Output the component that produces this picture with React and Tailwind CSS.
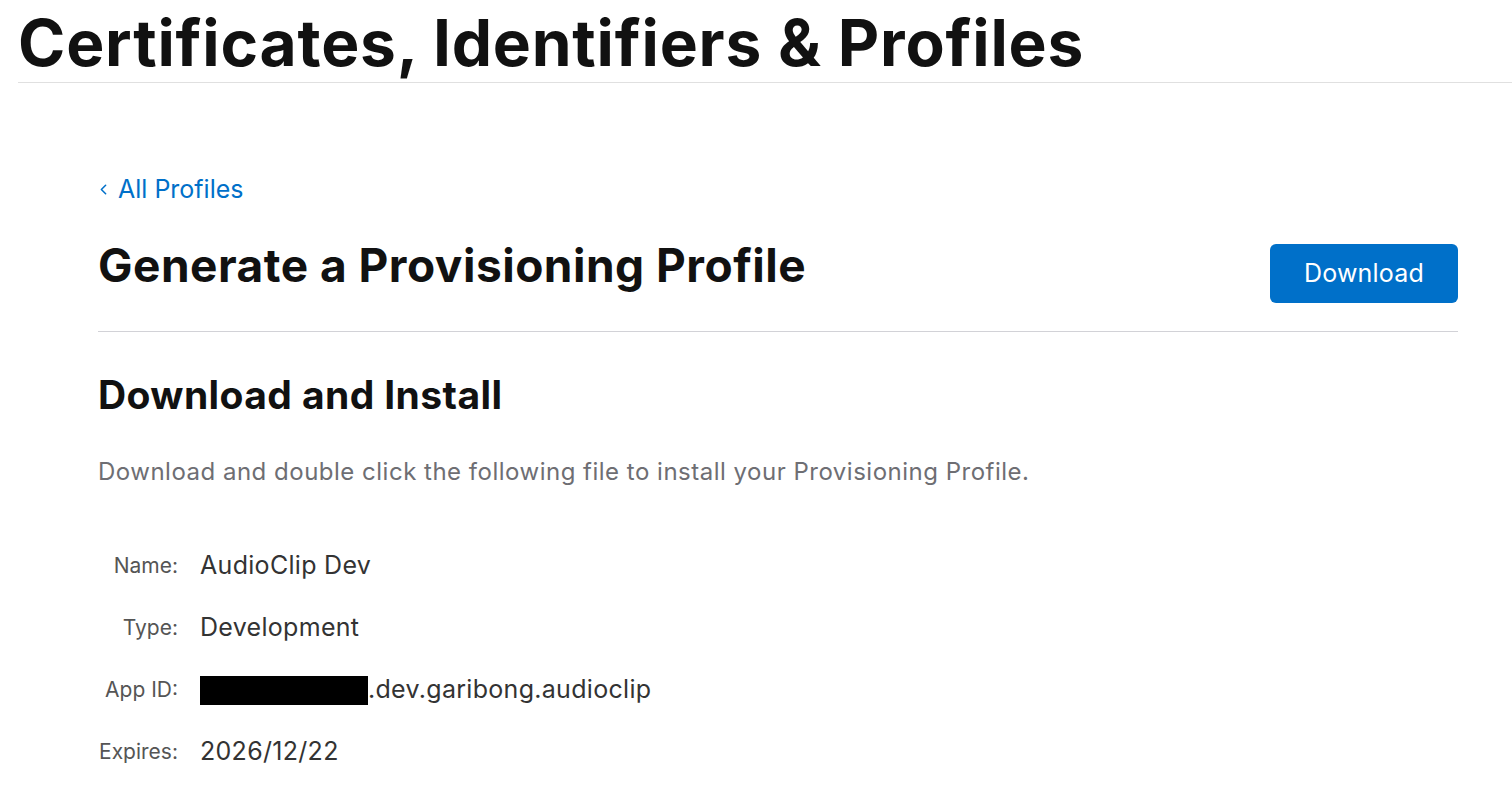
import { ChevronLeft } from 'lucide-react';

const rows = [
  { label: 'Name:', value: 'AudioClip Dev' },
  { label: 'Type:', value: 'Development' },
  { label: 'App ID:', value: '5.dev.garibong.audioclip', redacted: true },
  { label: 'Expires:', value: '2026/12/22' },
];

export default function App() {
  return (
    <div className="min-h-screen bg-white text-[#111] font-['Inter','Noto_Sans',sans-serif] overflow-hidden">
      {/* Page title */}
      <div className="ml-[18px] border-b border-[#e0e0e0] h-[83px] flex items-end">
        <h1 className="text-[64px] font-bold leading-[72px] tracking-[0.8px] pb-[3px] whitespace-nowrap">
          Certificates, Identifiers &amp; Profiles
        </h1>
      </div>

      <div className="ml-[98px] mr-[54px] mt-[92px]">
        <a href="#" className="flex items-center gap-[6px] text-[25px] text-[#0070c9] leading-none h-[28px]">
          <ChevronLeft size={17} strokeWidth={2.2} className="-ml-[3px]" />
          <span>All Profiles</span>
        </a>

        <div className="flex items-start justify-between mt-[29px] pb-[28px] border-b border-[#d2d2d7]">
          <h2 className="text-[46px] font-bold leading-[66px] tracking-[0.5px]">Generate a Provisioning Profile</h2>
          <button className="mt-[12px] w-[188px] h-[59px] rounded-[6px] bg-[#0070c9] text-white text-[25px] tracking-[0.2px]">
            Download
          </button>
        </div>

        {/* Download and Install */}
        <h3 className="text-[39px] font-bold leading-none tracking-[0.4px] mt-[43px]">Download and Install</h3>
        <p className="text-[24px] text-[#6e6e73] leading-none tracking-[0.5px] mt-[46px]">
          Download and double click the following file to install your Provisioning Profile.
        </p>

        <div className="mt-[67px] flex flex-col gap-[32px]">
          {rows.map((row) => (
            <div key={row.label} className="flex items-center h-[30px]">
              <span className="w-[80px] text-right text-[21px] text-[#555] whitespace-nowrap">{row.label}</span>
              <span className="ml-[22px] text-[25px] text-[#333] tracking-[0.3px] flex items-center">
                {row.redacted ? (
                  <>
                    <span className="inline-block w-[168px] h-[29px] bg-black" />
                    <span>{row.value.slice(1)}</span>
                  </>
                ) : (
                  row.value
                )}
              </span>
            </div>
          ))}
        </div>
      </div>
    </div>
  );
}
